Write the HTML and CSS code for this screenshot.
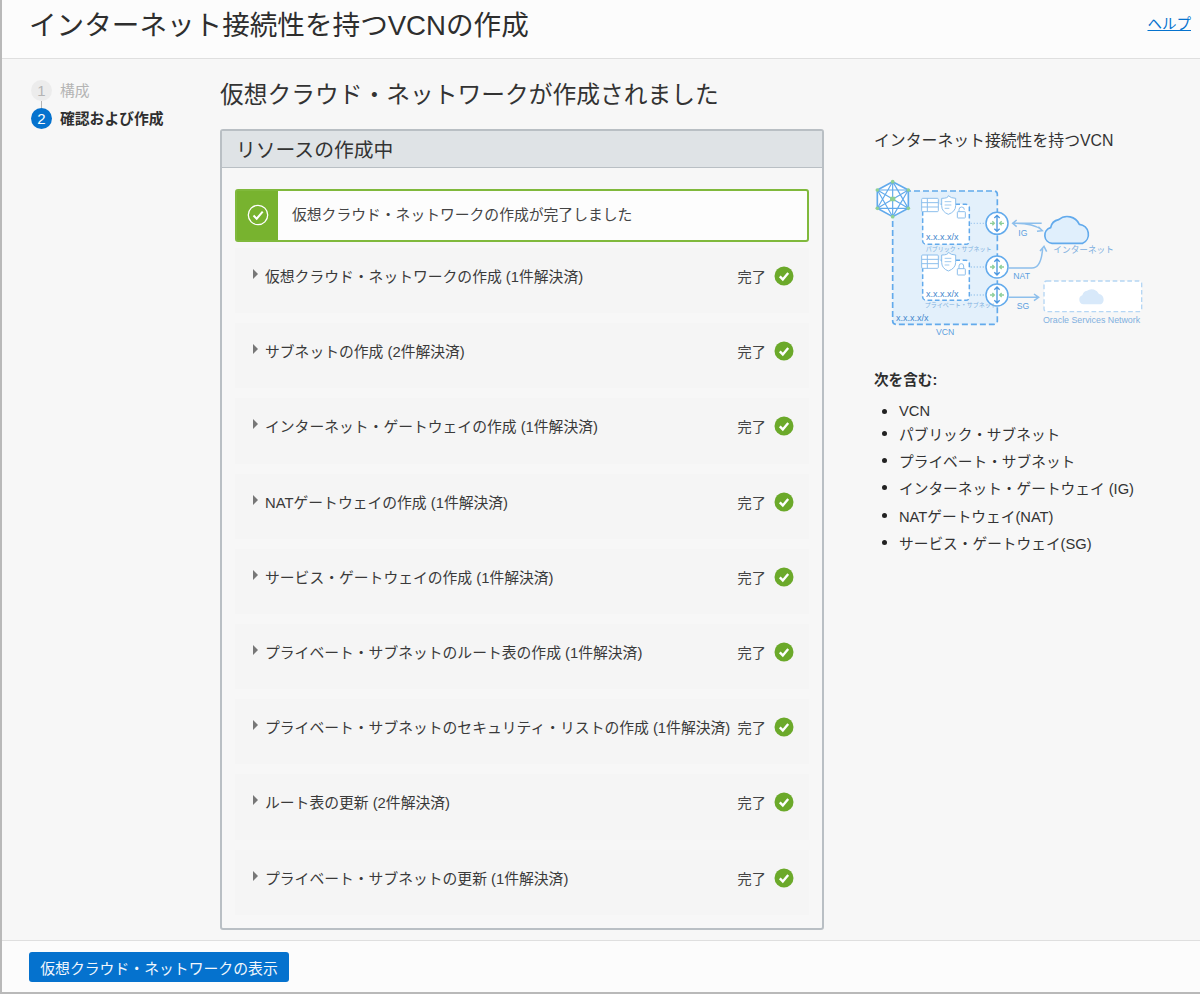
FILE: index.html
```html
<!DOCTYPE html>
<html lang="ja">
<head>
    <meta charset="UTF-8">
    <title>インターネット接続性を持つVCNの作成</title>
    <link rel="stylesheet" href="styles.css">
</head>
<body>
    <div class="page">
        <header class="top-bar">
            <h1>インターネット接続性を持つVCNの作成</h1>
            <a class="help-link" href="#">ヘルプ</a>
        </header>

        <div class="body-row">
            <ol class="steps">
                <li class="step step-done"><span class="step-num">1</span>構成</li>
                <li class="step step-current"><span class="step-num">2</span>確認および作成</li>
            </ol>

            <main class="main-col">
                <h2>仮想クラウド・ネットワークが作成されました</h2>
                <section class="panel">
                    <div class="panel-head">リソースの作成中</div>
                    <div class="panel-body">
                        <div class="banner">
                            <div class="banner-icon">
                                <svg width="22" height="22" viewBox="0 0 22 22"><circle cx="11" cy="11" r="9.7" fill="none" stroke="#fff" stroke-width="1.3"/><path d="M6.5 11.5l3.2 3.2 6-7" fill="none" stroke="#fff" stroke-width="2"/></svg>
                            </div>
                            <div class="banner-text">仮想クラウド・ネットワークの作成が完了しました</div>
                        </div>

                        <div class="task"><span class="arrow"></span><span class="task-name">仮想クラウド・ネットワークの作成 (1件解決済)</span><span class="task-state">完了</span><svg class="ok" viewBox="0 0 20 20"><circle cx="10" cy="10" r="9.5" fill="#6ba92a"/><path d="M5.8 10.4l3 3 5.4-6.4" fill="none" stroke="#fff" stroke-width="2.4"/></svg></div>
                        <div class="task"><span class="arrow"></span><span class="task-name">サブネットの作成 (2件解決済)</span><span class="task-state">完了</span><svg class="ok" viewBox="0 0 20 20"><circle cx="10" cy="10" r="9.5" fill="#6ba92a"/><path d="M5.8 10.4l3 3 5.4-6.4" fill="none" stroke="#fff" stroke-width="2.4"/></svg></div>
                        <div class="task"><span class="arrow"></span><span class="task-name">インターネット・ゲートウェイの作成 (1件解決済)</span><span class="task-state">完了</span><svg class="ok" viewBox="0 0 20 20"><circle cx="10" cy="10" r="9.5" fill="#6ba92a"/><path d="M5.8 10.4l3 3 5.4-6.4" fill="none" stroke="#fff" stroke-width="2.4"/></svg></div>
                        <div class="task"><span class="arrow"></span><span class="task-name">NATゲートウェイの作成 (1件解決済)</span><span class="task-state">完了</span><svg class="ok" viewBox="0 0 20 20"><circle cx="10" cy="10" r="9.5" fill="#6ba92a"/><path d="M5.8 10.4l3 3 5.4-6.4" fill="none" stroke="#fff" stroke-width="2.4"/></svg></div>
                        <div class="task"><span class="arrow"></span><span class="task-name">サービス・ゲートウェイの作成 (1件解決済)</span><span class="task-state">完了</span><svg class="ok" viewBox="0 0 20 20"><circle cx="10" cy="10" r="9.5" fill="#6ba92a"/><path d="M5.8 10.4l3 3 5.4-6.4" fill="none" stroke="#fff" stroke-width="2.4"/></svg></div>
                        <div class="task"><span class="arrow"></span><span class="task-name">プライベート・サブネットのルート表の作成 (1件解決済)</span><span class="task-state">完了</span><svg class="ok" viewBox="0 0 20 20"><circle cx="10" cy="10" r="9.5" fill="#6ba92a"/><path d="M5.8 10.4l3 3 5.4-6.4" fill="none" stroke="#fff" stroke-width="2.4"/></svg></div>
                        <div class="task"><span class="arrow"></span><span class="task-name">プライベート・サブネットのセキュリティ・リストの作成 (1件解決済)</span><span class="task-state">完了</span><svg class="ok" viewBox="0 0 20 20"><circle cx="10" cy="10" r="9.5" fill="#6ba92a"/><path d="M5.8 10.4l3 3 5.4-6.4" fill="none" stroke="#fff" stroke-width="2.4"/></svg></div>
                        <div class="task"><span class="arrow"></span><span class="task-name">ルート表の更新 (2件解決済)</span><span class="task-state">完了</span><svg class="ok" viewBox="0 0 20 20"><circle cx="10" cy="10" r="9.5" fill="#6ba92a"/><path d="M5.8 10.4l3 3 5.4-6.4" fill="none" stroke="#fff" stroke-width="2.4"/></svg></div>
                        <div class="task"><span class="arrow"></span><span class="task-name">プライベート・サブネットの更新 (1件解決済)</span><span class="task-state">完了</span><svg class="ok" viewBox="0 0 20 20"><circle cx="10" cy="10" r="9.5" fill="#6ba92a"/><path d="M5.8 10.4l3 3 5.4-6.4" fill="none" stroke="#fff" stroke-width="2.4"/></svg></div>
                    </div>
                </section>
            </main>

            <aside class="side-col">
                <h3>インターネット接続性を持つVCN</h3>
                <svg class="diagram" width="300" height="170" viewBox="0 0 900 510">
                    <!-- VCN -->
                    <rect x="98" y="60" width="314" height="400" rx="10" fill="#e3f0fb" stroke="#62aaec" stroke-width="5" stroke-dasharray="18 9"/>
                    <!-- サブネット -->
                    <rect x="188" y="100" width="140" height="120" rx="10" fill="#fff" stroke="#62aaec" stroke-width="4.5" stroke-dasharray="14 8"/>
                    <rect x="188" y="268" width="140" height="120" rx="10" fill="#fff" stroke="#62aaec" stroke-width="4.5" stroke-dasharray="14 8"/>
                    <g fill="none" stroke="#a9cdf0" stroke-width="4" stroke-dasharray="4 5">
                        <path d="M332 157h46M332 288h46M332 372h46"/>
                    </g>
                    <!-- 表・シールド・鍵 -->
                    <g>
                        <rect x="185" y="82" width="50" height="40" rx="3" fill="#fff" stroke="#8dbfec" stroke-width="3"/>
                        <path d="M185 95h50M185 108h50M202 82v40" stroke="#8dbfec" stroke-width="3" fill="none"/>
                        <path d="M245 82q20 0 20-8q8 8 22 8v22q0 18-22 26q-20-8-20-26z" fill="#fff" stroke="#8dbfec" stroke-width="3"/>
                        <path d="M254 92h20M254 102h20M254 112h14" stroke="#8dbfec" stroke-width="2.5" fill="none"/>
                    </g>
                    <g>
                        <rect x="185" y="252" width="50" height="40" rx="3" fill="#fff" stroke="#8dbfec" stroke-width="3"/>
                        <path d="M185 265h50M185 278h50M202 252v40" stroke="#8dbfec" stroke-width="3" fill="none"/>
                        <path d="M245 252q20 0 20-8q8 8 22 8v22q0 18-22 26q-20-8-20-26z" fill="#fff" stroke="#8dbfec" stroke-width="3"/>
                        <path d="M254 262h20M254 272h20M254 282h14" stroke="#8dbfec" stroke-width="2.5" fill="none"/>
                    </g>
                    <g fill="none" stroke="#8dbfec" stroke-width="3">
                        <rect x="292" y="122" width="24" height="19" rx="2"/><path d="M297 122v-6a8 8 0 0 1 16 0"/>
                        <rect x="292" y="293" width="24" height="19" rx="2"/><path d="M297 293v-8a7 7 0 0 1 14 0v8"/>
                    </g>
                    <!-- ルーター -->
                    <g fill="#fff" stroke="#62aaec" stroke-width="4.5">
                        <circle cx="411" cy="157" r="33"/><circle cx="411" cy="288" r="33"/><circle cx="411" cy="372" r="33"/>
                    </g>
                    <g fill="none" stroke-width="4">
                        <path d="M411 133v48M403 141l8-8 8 8M403 173l8 8 8-8" stroke="#4b97e0"/>
                        <path d="M390 157h12M397 151l6 6-6 6M432 157h-12M425 151l-6 6 6 6" stroke="#8fcf9a"/>
                        <path d="M411 264v48M403 272l8-8 8 8M403 304l8 8 8-8" stroke="#4b97e0"/>
                        <path d="M390 288h12M397 282l6 6-6 6M432 288h-12M425 282l-6 6 6 6" stroke="#8fcf9a"/>
                        <path d="M411 348v48M403 356l8-8 8 8M403 388l8 8 8-8" stroke="#4b97e0"/>
                        <path d="M390 372h12M397 366l6 6-6 6M432 372h-12M425 366l-6 6 6 6" stroke="#8fcf9a"/>
                    </g>
                    <!-- VCNハブ -->
                    <g fill="none" stroke="#62aaec" stroke-width="3.5">
                        <path d="M98 32L145 57V112L98 137L52 112V57Z" fill="#fff" stroke-width="5"/>
                        <path d="M98 32V137M52 57L145 112M145 57L52 112M98 32L52 112M98 32L145 112M52 57L98 137M145 57L98 137M52 57H145M52 112H145"/>
                    </g>
                    <g fill="#8fd094">
                        <circle cx="98" cy="32" r="5.5"/><circle cx="145" cy="57" r="5.5"/><circle cx="145" cy="112" r="5.5"/>
                        <circle cx="98" cy="137" r="5.5"/><circle cx="52" cy="112" r="5.5"/><circle cx="52" cy="57" r="5.5"/>
                        <rect x="90" y="77" width="16" height="14" rx="2"/>
                    </g>
                    <!-- 接続線 -->
                    <g fill="none" stroke="#8dbfec" stroke-width="4.5">
                        <path d="M460 157h85M470 147l-12 10 12 10M535 167l12 12-16 2M458 157q60-2 88 20"/>
                        <path d="M446 291h70q28 0 32-60M540 240l12-14 8 16"/>
                        <path d="M446 379h88M522 369l14 10-14 10"/>
                    </g>
                    <!-- クラウド -->
                    <path d="M576 217a24 24 0 0 1-4-47a30 30 0 0 1 24-24a40 40 0 0 1 62 14a30 30 0 0 1 10 57z" fill="#e0effc" stroke="#62aaec" stroke-width="5"/>
                    <!-- OSN -->
                    <rect x="552" y="330" width="293" height="92" rx="8" fill="#fff" stroke="#b5d6f4" stroke-width="4" stroke-dasharray="14 8"/>
                    <path d="M670 400a14 14 0 0 1-3-27a18 18 0 0 1 14-14a24 24 0 0 1 36 10a17 17 0 0 1 6 31z" fill="#d8e9fa"/>
                    <!-- ラベル -->
                    <g class="dia-label">
                        <text x="475" y="195">IG</text>
                        <text x="460" y="323">NAT</text>
                        <text x="470" y="413">SG</text>
                        <text x="228" y="491">VCN</text>
                        <text x="108" y="449" class="dia-dark">x.x.x.x/x</text>
                        <text x="198" y="207" class="dia-dark">x.x.x.x/x</text>
                        <text x="198" y="378" class="dia-dark">x.x.x.x/x</text>
                        <text x="197" y="239" class="dia-small">パブリック・サブネット</text>
                        <text x="194" y="408" class="dia-small">プライベート・サブネット</text>
                        <text x="580" y="246" class="dia-cloud">インターネット</text>
                        <text x="549" y="457" class="dia-osn">Oracle Services Network</text>
                    </g>
                </svg>
                <h4>次を含む:</h4>
                <ul class="includes">
                    <li>VCN</li>
                    <li>パブリック・サブネット</li>
                    <li>プライベート・サブネット</li>
                    <li>インターネット・ゲートウェイ (IG)</li>
                    <li>NATゲートウェイ(NAT)</li>
                    <li>サービス・ゲートウェイ(SG)</li>
                </ul>
            </aside>
        </div>

        <footer class="bottom-bar">
            <button class="primary-btn">仮想クラウド・ネットワークの表示</button>
        </footer>
    </div>
</body>
</html>
```
FILE: styles.css
```css
* {
    margin: 0;
    padding: 0;
    box-sizing: border-box;
}

html, body {
    height: 100%;
}

body {
    font-family: "Liberation Sans", "Noto Sans CJK JP", sans-serif;
    font-size: 14.8px;
    color: #333;
    background: #fff;
}

.page {
    height: 994px;
    display: flex;
    flex-direction: column;
    background: #f7f7f7;
    border-left: 2px solid #b9b9b9;
    border-bottom: 2px solid #b9b9b9;
}

.top-bar {
    height: 59px;
    flex-shrink: 0;
    display: flex;
    justify-content: space-between;
    align-items: center;
    padding: 0 9px 13px 27px;
    background: #fcfcfc;
    border-bottom: 1px solid #dfdfdf;
}

.top-bar h1 {
    font-size: 27.6px;
    font-weight: 400;
    color: #2e2e2e;
}

.help-link {
    font-size: 14.5px;
    color: #0572ce;
    text-decoration: underline;
}

.body-row {
    flex: 1;
    display: flex;
    min-height: 0;
}

/* ステップ */
.steps {
    width: 218px;
    flex-shrink: 0;
    list-style: none;
    padding: 21px 0 0 29px;
}

.step {
    display: flex;
    align-items: flex-start;
    gap: 8px;
    height: 21px;
    line-height: 22px;
    font-size: 14.8px;
    position: relative;
}

.step + .step {
    margin-top: 7px;
}

.step + .step::before {
    content: '';
    position: absolute;
    left: 10px;
    top: -7px;
    width: 1px;
    height: 7px;
    background: #b5b5b5;
}

.step-num {
    width: 21px;
    height: 21px;
    border-radius: 50%;
    display: flex;
    align-items: center;
    justify-content: center;
    font-size: 15px;
}

.step-done {
    color: #b4b4b4;
}

.step-done .step-num {
    background: #ececec;
}

.step-current {
    font-weight: 700;
    color: #2f2f2f;
}

.step-current .step-num {
    background: #0572ce;
    color: #fff;
    font-weight: 400;
}

/* メイン */
.main-col {
    width: 604px;
    flex-shrink: 0;
    padding-top: 20px;
}

.main-col h2 {
    font-size: 23.75px;
    font-weight: 400;
    line-height: 32px;
    color: #333;
    margin-bottom: 18px;
}

.panel {
    height: 801px;
    border: 2px solid #b9bfc4;
    border-radius: 3px;
    background: #f7f7f7;
    display: flex;
    flex-direction: column;
}

.panel-head {
    height: 37px;
    flex-shrink: 0;
    padding: 0 0 2px 14px;
    display: flex;
    align-items: center;
    font-size: 19.8px;
    color: #333;
    background: #dfe3e6;
    border-bottom: 1px solid #b9bfc4;
}

.panel-body {
    padding: 21px 13px 0 13px;
}

.banner {
    height: 53px;
    display: flex;
    border: 2px solid #80b93c;
    border-radius: 3px;
    background: #fdfdfd;
    margin-bottom: 6px;
}

.banner-icon {
    width: 41px;
    flex-shrink: 0;
    display: flex;
    align-items: center;
    justify-content: center;
    padding-bottom: 2px;
    background: #78b32f;
}

.banner-text {
    padding: 0 0 5px 14px;
    display: flex;
    align-items: center;
    color: #444;
}

.task {
    height: 65.2px;
    margin-bottom: 10px;
    padding: 18px 15px 0 18px;
    display: flex;
    align-items: flex-start;
    background: #f5f5f5;
    line-height: 22px;
}

.arrow {
    width: 0;
    height: 0;
    margin-top: 3px;
    margin-right: 7px;
    border-left: 5px solid #777;
    border-top: 5px solid transparent;
    border-bottom: 5px solid transparent;
    flex-shrink: 0;
}

.task-name {
    flex: 1;
    white-space: nowrap;
    color: #3a3a3a;
}

.task-state {
    margin-right: 8px;
    font-size: 14.2px;
    color: #444;
}

.ok {
    width: 20px;
    height: 20px;
    flex-shrink: 0;
}

/* 右カラム */
.side-col {
    flex: 1;
    padding: 71px 0 0 50px;
}

.side-col h3 {
    font-size: 15.85px;
    font-weight: 400;
    line-height: 22px;
    color: #333;
    margin-bottom: 19px;
}

.diagram {
    display: block;
    margin-left: -14px;
}

.dia-label text {
    font-size: 26px;
    fill: #5c9fe0;
}

.dia-label .dia-dark {
    fill: #3f86cc;
    font-size: 27px;
}

.dia-label .dia-small {
    font-size: 18px;
    fill: #7fb0e0;
}

.dia-label .dia-cloud {
    font-size: 26px;
    fill: #7fb0e0;
}

.dia-label .dia-osn {
    font-size: 26.5px;
    fill: #7fb0e0;
}

.side-col h4 {
    margin-top: 27px;
    font-size: 14.6px;
    font-weight: 700;
    color: #2f2f2f;
    margin-bottom: 14px;
}

.includes {
    list-style: none;
    padding-left: 8px;
}

.includes li {
    display: flex;
    align-items: center;
    gap: 12px;
    margin-bottom: 6.2px;
    font-size: 14.7px;
    color: #333;
}

.includes li:first-child {
    margin-bottom: 4px;
}

.includes li::before {
    content: '';
    width: 5px;
    height: 5px;
    flex-shrink: 0;
    border-radius: 50%;
    background: #222;
}

/* フッター */
.bottom-bar {
    height: 52px;
    flex-shrink: 0;
    padding: 11px 0 0 27px;
    background: #fcfcfc;
    border-top: 1px solid #dfdfdf;
}

.primary-btn {
    height: 30px;
    width: 260px;
    border: none;
    border-radius: 3px;
    background: #0572ce;
    color: #f2f7fc;
    font-family: inherit;
    font-size: 14.85px;
}
```
